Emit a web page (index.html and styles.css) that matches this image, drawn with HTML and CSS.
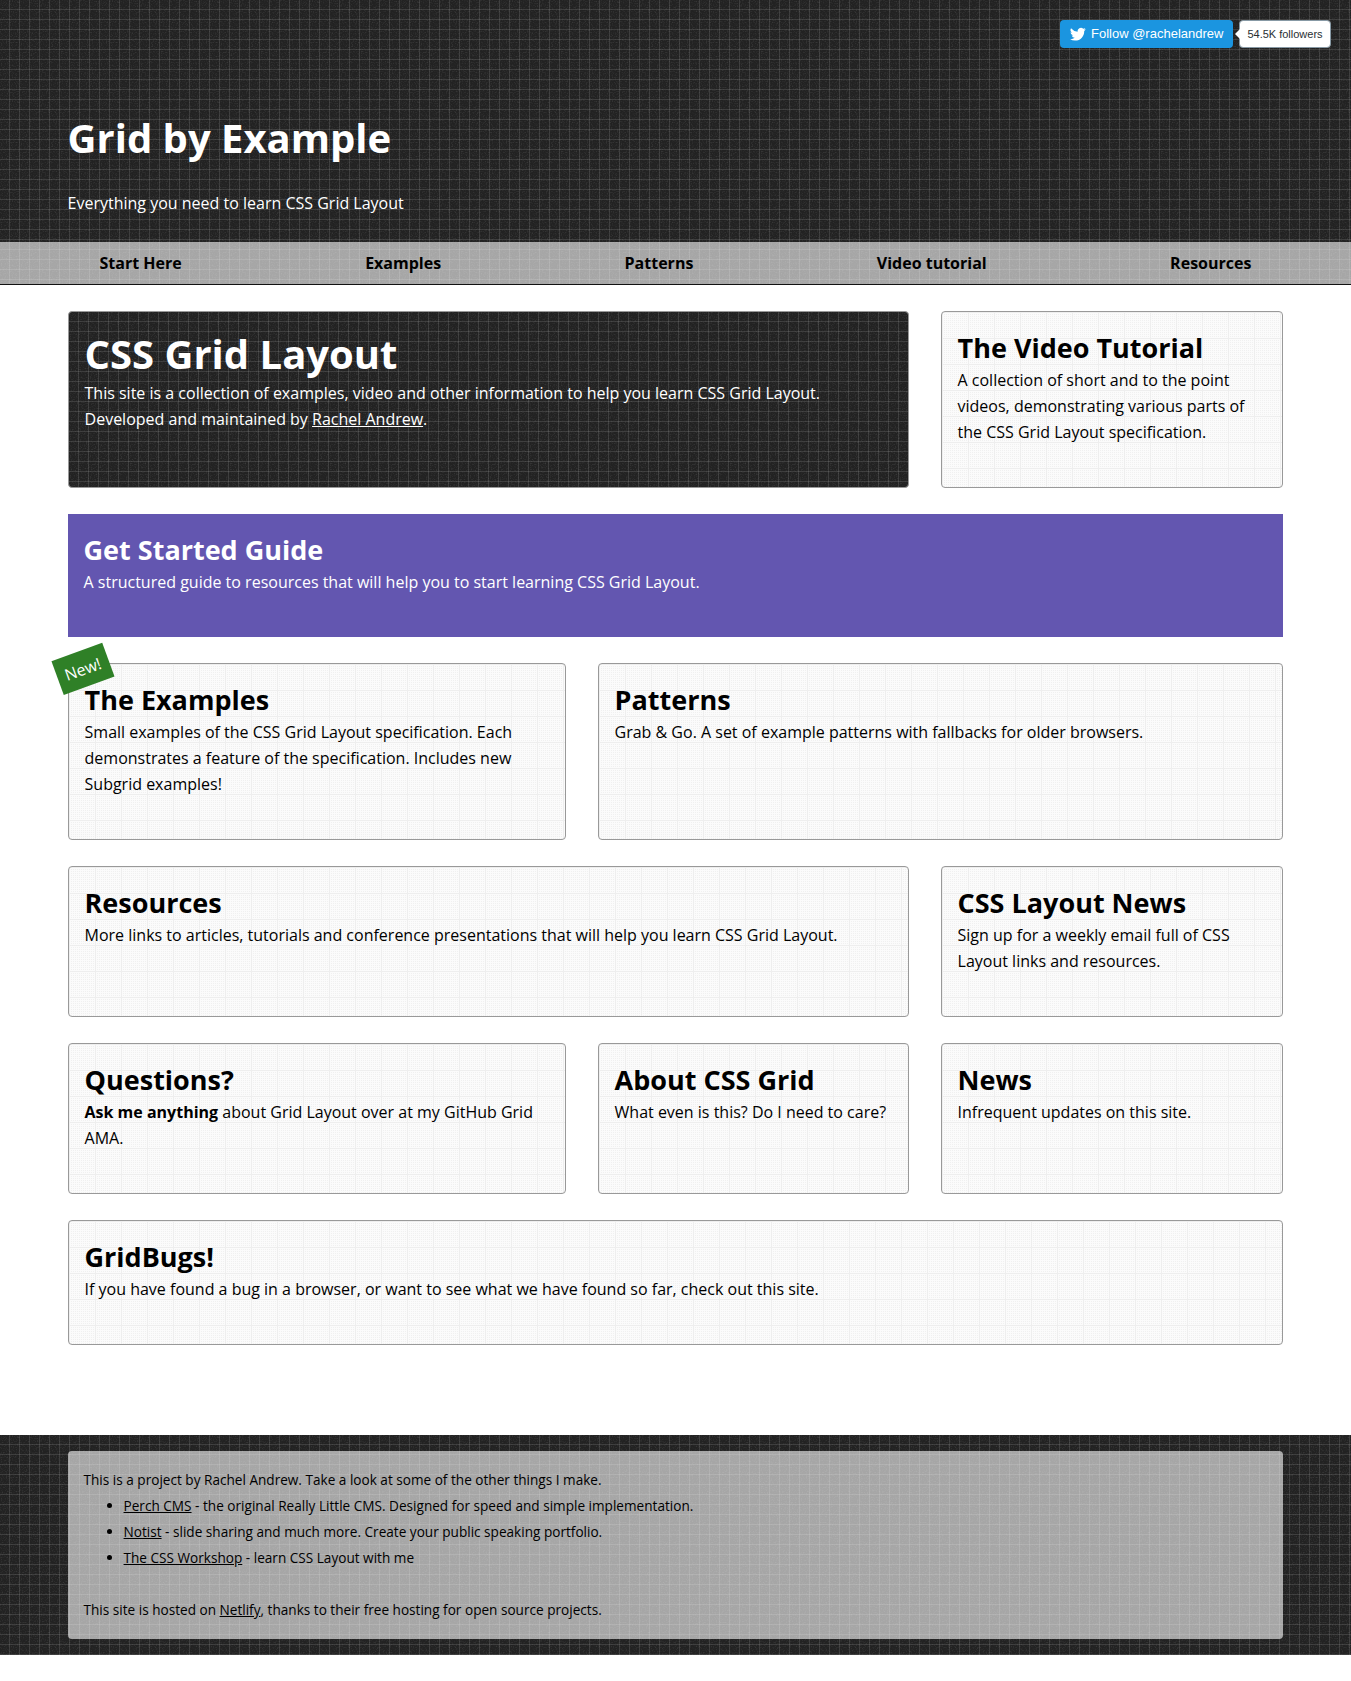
FILE: index.html
```html
<!DOCTYPE html>
<html lang="en">
<head>
<meta charset="utf-8">
<title>Grid by Example</title>
<link rel="stylesheet" href="styles.css">
</head>
<body>
<header class="masthead">
  <div class="follow">
    <a class="follow-btn"><svg viewBox="0 0 24 24" width="16" height="16"><path fill="#fff" d="M23.6 4.9a9.700 9.700 0 0 1-2.800.77 4.900 4.900 0 0 0 2.140-2.690 9.700 9.700 0 0 1-3.090 1.180 4.870 4.870 0 0 0-8.300 4.440A13.820 13.820 0 0 1 1.520 3.520a4.870 4.870 0 0 0 1.500 6.500 4.850 4.850 0 0 1-2.200-.61v.06a4.870 4.870 0 0 0 3.900 4.770 4.870 4.870 0 0 1-2.200.09 4.870 4.870 0 0 0 4.550 3.380A9.770 9.770 0 0 1 0 19.730a13.780 13.780 0 0 0 7.460 2.190c8.950 0 13.850-7.420 13.850-13.850l-.02-.63a9.900 9.900 0 0 0 2.310-2.540z"/></svg>Follow @rachelandrew</a>
    <span class="count">54.5K followers</span>
  </div>
  <div class="brand">
    <h1>Grid by Example</h1>
    <p>Everything you need to learn CSS Grid Layout</p>
  </div>
  <nav class="nav"><a>Start Here</a><a>Examples</a><a>Patterns</a><a>Video tutorial</a><a>Resources</a></nav>
</header>
<main class="grid">
  <section class="card dark two"><h1>CSS Grid Layout</h1><p>This site is a collection of examples, video and other information to help you learn CSS Grid Layout. Developed and maintained by <a class="link">Rachel Andrew</a>.</p></section>
  <section class="card"><h2>The Video Tutorial</h2><p>A collection of short and to the point videos, demonstrating various parts of the CSS Grid Layout specification.</p></section>
  <section class="card guide all"><h2>Get Started Guide</h2><p>A structured guide to resources that will help you to start learning CSS Grid Layout.</p></section>
  <section class="card"><span class="badge">New!</span><h2>The Examples</h2><p>Small examples of the CSS Grid Layout specification. Each demonstrates a feature of the specification. Includes new Subgrid examples!</p></section>
  <section class="card two"><h2>Patterns</h2><p>Grab &amp; Go. A set of example patterns with fallbacks for older browsers.</p></section>
  <section class="card two"><h2>Resources</h2><p>More links to articles, tutorials and conference presentations that will help you learn CSS Grid Layout.</p></section>
  <section class="card"><h2>CSS Layout News</h2><p>Sign up for a weekly email full of CSS Layout links and resources.</p></section>
  <section class="card"><h2>Questions?</h2><p><strong>Ask me anything</strong> about Grid Layout over at my GitHub Grid AMA.</p></section>
  <section class="card"><h2>About CSS Grid</h2><p>What even is this? Do I need to care?</p></section>
  <section class="card"><h2>News</h2><p>Infrequent updates on this site.</p></section>
  <section class="card all"><h2>GridBugs!</h2><p>If you have found a bug in a browser, or want to see what we have found so far, check out this site.</p></section>
</main>
<footer class="footer">
  <div class="panel">
    <p>This is a project by Rachel Andrew. Take a look at some of the other things I make.</p>
    <ul>
      <li><a class="link">Perch CMS</a> - the original Really Little CMS. Designed for speed and simple implementation.</li>
      <li><a class="link">Notist</a> - slide sharing and much more. Create your public speaking portfolio.</li>
      <li><a class="link">The CSS Workshop</a> - learn CSS Layout with me</li>
    </ul>
    <p>This site is hosted on <a class="link">Netlify</a>, thanks to their free hosting for open source projects.</p>
  </div>
</footer>
</body>
</html>
```
FILE: styles.css
```css
* { box-sizing: border-box; }
body { margin: 0; background: #fff; color: #000; font: 16px/26px "Open Sans", sans-serif; }
h1, h2, p, ul { margin: 0; }
h1 { font-size: 40px; line-height: 52px; }
h2 { font-size: 27px; line-height: 39px; }
.link { text-decoration: underline; }

/* Graph-paper texture: 10px rules over fine grain */
.masthead, .footer, .card.dark {
  background-color: #222;
  background-image:
    linear-gradient(to right, transparent 9px, rgba(255,255,255,.12) 9px),
    linear-gradient(to bottom, transparent 9px, rgba(255,255,255,.12) 9px),
    url("data:image/svg+xml,%3Csvg xmlns='http://www.w3.org/2000/svg' width='100' height='100'%3E%3Cfilter id='n'%3E%3CfeTurbulence type='fractalNoise' baseFrequency='.8' numOctaves='2' stitchTiles='stitch'/%3E%3CfeColorMatrix values='0 0 0 0 1 0 0 0 0 1 0 0 0 0 1 .25 0 0 0 -.12'/%3E%3C/filter%3E%3Crect width='100' height='100' filter='url(%23n)'/%3E%3C/svg%3E");
  background-size: 10px 10px, 10px 10px, 100px 100px;
  color: #fff;
}
.masthead { display: flex; flex-direction: column; height: 285px; }
.follow { display: flex; align-self: flex-end; gap: 6px; margin: 20px 20px 0 0; height: 28px; font-family: "Liberation Sans", sans-serif; line-height: 28px; }
.follow-btn { display: flex; align-items: center; gap: 5px; width: 173px; padding-left: 10px; border-radius: 4px; background: #1b95e0; font-size: 13px; white-space: nowrap; }
.count { position: relative; width: 92px; border: 1px solid #8799a5; border-radius: 4px; background: #fff; color: #292f33; font-size: 11px; line-height: 26px; text-align: center; white-space: nowrap; }
.count::before { content: ""; position: absolute; left: -5px; top: 8px; border: 5px solid transparent; border-left: 0; border-right-color: #fff; }
.brand { flex: 1; display: flex; flex-direction: column; justify-content: flex-end; gap: 26px; padding: 0 5% 26px; }
.nav { display: flex; justify-content: space-between; padding: 8px calc(5% + 32px); border-bottom: 1px solid #111; background: rgba(255,255,255,.6); background-clip: padding-box; color: #000; font-weight: 700; }

.grid { display: grid; grid-template-columns: 498px 311px 1fr; gap: 26px 32px; margin: 26px 5% 90px; }
/* Light paper: 26px rules over a 2px dot screen */
.card {
  position: relative;
  padding: 16px 16px 42px;
  border: 1px solid #999;
  border-radius: 4px;
  background-color: #fbfbfb;
  background-image:
    linear-gradient(to right, #eee 1px, transparent 1px),
    linear-gradient(to bottom, #eee 1px, transparent 1px),
    linear-gradient(to right, transparent 1px, #fbfbfb 1px),
    linear-gradient(to bottom, #f0f0f0 1px, #fbfbfb 1px);
  background-size: 26px 26px, 26px 26px, 2px 2px, 2px 2px;
}
.two { grid-column: span 2; }
.all { grid-column: 1 / -1; }
.guide { border: 0; border-radius: 0; background: #6356b0; color: #fff; }
.badge { position: absolute; left: -13px; top: -13px; padding: 5px 8px; background: #2f8027; color: #fff; transform: rotate(-20deg); }

.footer { height: 220px; padding: 16px 5%; font-size: 13.6px; }
.panel { height: 188px; padding: 16px; border-radius: 4px; background: rgba(255,255,255,.6); color: #000; }
.panel ul { padding-left: 40px; margin-bottom: 26px; }
```
